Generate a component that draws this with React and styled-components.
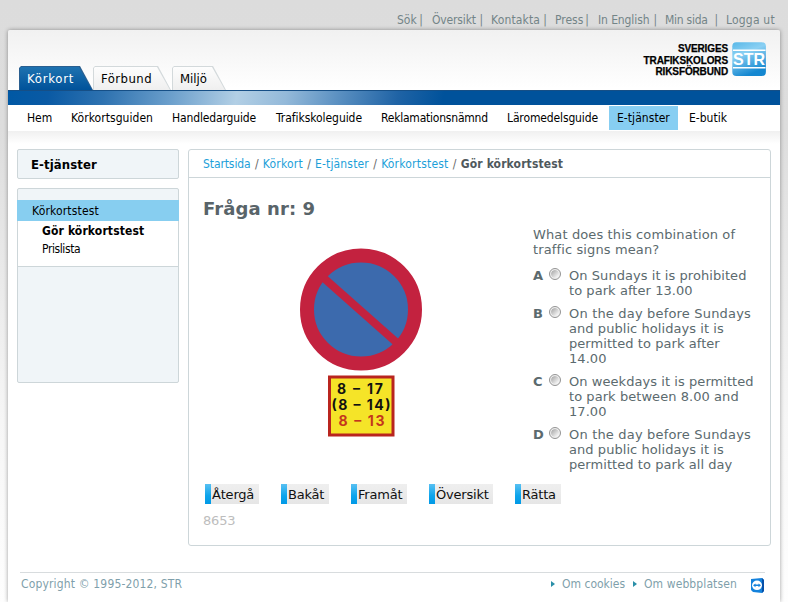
import React from 'react';
import styled, { createGlobalStyle, css } from 'styled-components';

const narrow = '"DejaVu Sans Condensed", "DejaVu Sans", sans-serif';
const wide = '"DejaVu Sans", sans-serif';

const Global = createGlobalStyle`
  * { box-sizing: border-box; }
  body {
    margin: 0;
    height: 602px;
    overflow: hidden;
    background: linear-gradient(#dcdcdc 0, #dddddd 130px, #f6f6f6 420px, #fefefe 602px);
    font: 12px ${narrow};
    color: #000;
  }
`;

const Text = styled.span`
  white-space: nowrap;
  letter-spacing: ${p => p.$ls || 0}px;
`;

const Page = styled.div`
  height: 602px;
  display: flex;
  flex-direction: column;
`;

const TopLinks = styled.nav`
  height: 30px;
  padding: 13px 0 0 397px;
  display: flex;
  line-height: 14px;
  color: #738487;
`;

const TopLink = styled.a`
  width: ${p => p.$w}px;
  display: flex;
  justify-content: space-between;
  white-space: nowrap;
  letter-spacing: ${p => p.$ls || 0}px;
  margin-right: ${p => p.$gap}px;
`;

const Sheet = styled.div`
  flex: 1;
  width: 772px;
  margin-left: 8px;
  background: linear-gradient(#f1f1f1, #fff 58px);
  box-shadow: 0 0 4px rgba(0, 0, 0, 0.38);
  border-radius: 2px 2px 0 0;
  display: flex;
  flex-direction: column;
`;

const Header = styled.header`
  height: 60px;
  display: flex;
  justify-content: space-between;
  align-items: flex-end;
  padding-left: 11px;
`;

const Tabs = styled.div`
  display: flex;
`;

const Tab = styled.a`
  position: relative;
  width: ${p => p.$w}px;
  height: 24px;
  margin-right: ${p => p.$gap || 0}px;
  padding: 5px 0 0 8px;
  font-size: 13px;
  line-height: 16px;
  letter-spacing: ${p => p.$ls}px;
  white-space: nowrap;
  clip-path: polygon(0 2px, 2px 0, calc(100% - 13px) 0, 100% 100%, 0 100%);
  background: #d3d9db;
  isolation: isolate;
  &::before {
    content: '';
    position: absolute;
    z-index: -1;
    inset: 1px 1px 0;
    clip-path: polygon(0 1px, 1px 0, calc(100% - 13px) 0, 100% 100%, 0 100%);
    background: linear-gradient(#fdfdfd, #efefef);
  }
  ${p => p.$active && css`
    color: #fff;
    background: #2a5f90;
    &::before { background: linear-gradient(#1e72b0, #00529a); }
  `}
`;

const Brand = styled.div`
  display: flex;
  align-items: flex-start;
  gap: 4px;
  height: 60px;
  padding: 12px 13px 0 0;
`;

const BrandName = styled.div`
  padding-top: 1px;
  text-align: right;
  font: bold 10px/11.6px "Liberation Sans", sans-serif;
  letter-spacing: -0.13px;
  -webkit-text-stroke: 0.25px #000;
`;

const BlueBar = styled.div`
  height: 15px;
  border-top: 1px solid #164f86;
  background: linear-gradient(100deg, #0058a4 0, #0a5aa4 40px, #2e72b0 95px, #6a9ecb 160px, #b2cfe5 226px, #93b9d9 275px, #5c91c2 325px, #1f63a5 385px, #00529b 430px);
`;

const MainNav = styled.nav`
  height: 26px;
  padding: 1px 0 1px 11px;
  display: flex;
`;

const NavItem = styled.a`
  width: ${p => p.$w}px;
  padding-left: ${p => p.$pad || 8}px;
  line-height: 24px;
  letter-spacing: ${p => p.$ls || 0}px;
  white-space: nowrap;
  background: ${p => (p.$active ? '#87cef2' : 'transparent')};
`;

const Body = styled.div`
  display: flex;
  align-items: flex-start;
  gap: 9px;
  height: 441px;
  padding: 18px 9px 0;
  background: linear-gradient(#f0f0f0, #fff 13px);
`;

const Side = styled.aside`
  width: 162px;
  display: flex;
  flex-direction: column;
  gap: 9px;
`;

const SideTitle = styled.h2`
  margin: 0;
  height: 30px;
  padding-left: 13px;
  border: 1px solid #cdd6d9;
  border-radius: 2px;
  background: #f0f5f8;
  font-size: 13px;
  line-height: 30px;
  letter-spacing: 0.1px;
`;

const SideMenu = styled.div`
  height: 195px;
  padding-top: 11px;
  border: 1px solid #cdd6d9;
  border-radius: 2px;
  background: #f0f5f8;
`;

const SideHead = styled.a`
  display: block;
  height: 21px;
  margin: 0 -1px;
  padding-left: 15px;
  background: #87cef0;
  line-height: 23px;
  letter-spacing: 0.16px;
`;

const SideList = styled.div`
  display: flex;
  flex-direction: column;
  height: 46px;
  padding-left: 24px;
  background: #fff;
  border-bottom: 1px solid #cdd6d9;
`;

const SideLink = styled.a`
  height: 18px;
  line-height: 21px;
  font-weight: ${p => (p.$bold ? 700 : 400)};
  letter-spacing: ${p => p.$ls}px;
`;

const Content = styled.main`
  width: 583px;
  height: 397px;
  border: 1px solid #cdd6d9;
  border-radius: 3px;
  background: #fff;
`;

const Crumbs = styled.div`
  height: 28px;
  padding-left: 14px;
  display: flex;
  gap: 4.3px;
  border-bottom: 1px solid #cdd6d9;
  line-height: 29px;
  color: #666;
`;

const Crumb = styled(Text)`
  color: #1d9fd9;
`;

const Here = styled.b`
  color: #50595d;
  letter-spacing: 0.13px;
`;

const Question = styled.h1`
  margin: 0;
  height: 49px;
  padding: 19px 0 0 14px;
  font: bold 18px/23px ${wide};
  letter-spacing: 0.1px;
  color: #596469;
`;

const Quiz = styled.div`
  display: flex;
  height: 257px;
  padding-left: 110px;
`;

const Sign = styled.svg`
  width: 124px;
  height: 190px;
  margin: 21px 110px 0 0;
  flex: none;
`;

const PlateText = styled.text`
  font: 650 14px Inter, sans-serif;
  text-anchor: middle;
  fill: ${p => (p.$red ? '#c4361d' : '#111')};
`;

const Answers = styled.div`
  font: 13px/15px ${wide};
  color: #5b6a6e;
`;

const Prompt = styled.p`
  margin: 0 0 11px;
`;

const Answer = styled.label`
  display: flex;
  margin-bottom: 8px;
`;

const Letter = styled.b`
  width: 16px;
`;

const Radio = styled.input`
  appearance: none;
  width: 12px;
  height: 12px;
  margin: 0 8px 0 0;
  border: 1px solid #949494;
  border-radius: 50%;
  background: linear-gradient(135deg, #b4b4b4 20%, #f0f0f0 80%) content-box, #f4f4f4;
  padding: 1px;
  box-shadow: inset 0 0 0 1px #eee;
`;

const AnswerText = styled.span`
  display: flex;
  flex-direction: column;
`;

const Buttons = styled.div`
  display: flex;
  padding-left: 16px;
  height: 20px;
`;

const Button = styled.button`
  width: ${p => p.$w}px;
  height: 20px;
  margin: 0 ${p => p.$gap}px 0 0;
  padding: 1px 0 0 1px;
  border: 0;
  border-left: 6px solid transparent;
  background: linear-gradient(#efefef, #e6e6e6) padding-box,
    linear-gradient(#58c0f2, #0ca4ec 60%, #0099e6) border-box;
  font: 13px/20px ${wide};
  letter-spacing: ${p => p.$ls}px;
  text-align: left;
  white-space: nowrap;
  color: #111;
`;

const Counter = styled.div`
  padding: 9px 0 0 14px;
  font: 13px/15px ${wide};
  letter-spacing: -0.2px;
  color: #bdbdbd;
`;

const Footer = styled.footer`
  display: flex;
  height: 30px;
  margin: 0 15px 0 12px;
  border-top: 1px solid #d8dcde;
  padding: 4px 0 0 1px;
  line-height: 15px;
  color: #7f9fab;
`;

const Copyright = styled(Text)`
  width: 530px;
`;

const FootLink = styled.a`
  width: ${p => p.$w}px;
  display: flex;
  letter-spacing: ${p => p.$ls}px;
  white-space: nowrap;
  &::before {
    content: '';
    margin: 4px 7px 0 0;
    width: 0;
    height: 0;
    border: 3px solid transparent;
    border-left: 4px solid #2a8fa8;
    border-right: 0;
  }
`;

const Remote = styled.svg`
  width: 15px;
  height: 17px;
  margin-left: -1px;
`;

function Logo() {
  return (
    <svg width="35" height="35" viewBox="0 0 35 35">
      <defs>
        <linearGradient id="lg" x2="0.4" y2="1">
          <stop offset="0" stopColor="#58b8e8" />
          <stop offset="0.4" stopColor="#8bd0f3" />
          <stop offset="1" stopColor="#1487d0" />
        </linearGradient>
      </defs>
      <rect x="0.3" y="0.3" width="33.6" height="33.6" rx="4" fill="url(#lg)" />
      <path d="M1 8.3H33.5M1 25.7H33.5" stroke="#fff" strokeWidth="1.6" />
      <text x="1" y="23" fontFamily="Liberation Sans, sans-serif" fontWeight="700" fontSize="17" textLength="32" lengthAdjust="spacingAndGlyphs" fill="#fff">STR</text>
    </svg>
  );
}

function TrafficSign() {
  return (
    <Sign viewBox="0 0 124 190">
      <circle cx="62" cy="61.5" r="54" fill="#3c6aad" stroke="#c3223f" strokeWidth="14" />
      <path d="M22.5 28L101.5 98" stroke="#c3223f" strokeWidth="8" />
      <rect x="30.5" y="129" width="63.5" height="58" fill="#f5e428" stroke="#b9251f" strokeWidth="3" />
      <PlateText x="61" y="145.5" textLength="46">8 – 17</PlateText>
      <PlateText x="62" y="162" textLength="59">(8 – 14)</PlateText>
      <PlateText x="62.5" y="178.3" textLength="46" $red>8 – 13</PlateText>
    </Sign>
  );
}

const topLinks = [
  ['Sök', '|', 26, 9, 0], ['Översikt', '|', 51, 8, -0.15], ['Kontakta', '|', 56, 8, 0.15],
  ['Press', '|', 34, 9, 0], ['In English', '|', 59, 8, -0.1], ['Min sida', '|', 53, 8, -0.25], ['Logga ut', '', 52, 0, 0.2],
];

const navItems = [
  ['Hem', 44, 0], ['Körkortsguiden', 101, 0.05], ['Handledarguide', 104, -0.14], ['Trafikskoleguide', 105, -0.05],
  ['Reklamationsnämnd', 126, -0.22], ['Läromedelsguide', 110, -0.13], ['E-tjänster', 69, 0.05, true], ['E-butik', 60, 0, false, 11],
];

const answers = [
  ['A', ['On Sundays it is prohibited', 'to park after 13.00']],
  ['B', ['On the day before Sundays', 'and public holidays it is', 'permitted to park after', '14.00']],
  ['C', ['On weekdays it is permitted', 'to park between 8.00 and', '17.00']],
  ['D', ['On the day before Sundays', 'and public holidays it is', 'permitted to park all day']],
];

const buttons = [['Återgå', 54, 22], ['Bakåt', 48, 22], ['Framåt', 56, 22], ['Översikt', 64, 22], ['Rätta', 46, 0]];

export default function App() {
  return (
    <Page>
      <Global />
      <TopLinks>
        {topLinks.map(([t, bar, w, gap, ls]) => (
          <TopLink key={t} $w={w} $gap={gap} $ls={ls}>{t}{bar && <span>{bar}</span>}</TopLink>
        ))}
      </TopLinks>
      <Sheet>
        <Header>
          <Tabs>
            <Tab $w={74} $ls={0.75} $active>Körkort</Tab>
            <Tab $w={78} $gap={1} $ls={0.45}>Förbund</Tab>
            <Tab $w={54} $ls={0}>Miljö</Tab>
          </Tabs>
          <Brand>
            <BrandName>SVERIGES<br />TRAFIKSKOLORS<br />RIKSFÖRBUND</BrandName>
            <Logo />
          </Brand>
        </Header>
        <BlueBar />
        <MainNav>
          {navItems.map(([t, w, ls, active, pad]) => (
            <NavItem key={t} $w={w} $ls={ls} $active={active} $pad={pad}>{t}</NavItem>
          ))}
        </MainNav>
        <Body>
          <Side>
            <SideTitle>E-tjänster</SideTitle>
            <SideMenu>
              <SideHead>Körkortstest</SideHead>
              <SideList>
                <SideLink $bold $ls={0.13}>Gör körkortstest</SideLink>
                <SideLink $ls={-0.4}>Prislista</SideLink>
              </SideList>
            </SideMenu>
          </Side>
          <Content>
            <Crumbs>
              <Crumb $ls={-0.1}>Startsida</Crumb>/
              <Crumb $ls={0.2}>Körkort</Crumb>/
              <Crumb $ls={0.15}>E-tjänster</Crumb>/
              <Crumb $ls={0.2}>Körkortstest</Crumb>/
              <Here>Gör körkortstest</Here>
            </Crumbs>
            <Question>Fråga nr: 9</Question>
            <Quiz>
              <TrafficSign />
              <Answers>
                <Prompt>
                  <Text $ls={0.12}>What does this combination of</Text><br />
                  <Text $ls={0.12}>traffic signs mean?</Text>
                </Prompt>
                {answers.map(([letter, lines]) => (
                  <Answer key={letter}>
                    <Letter>{letter}</Letter>
                    <Radio type="radio" name="answer" />
                    <AnswerText>{lines.map(l => <Text key={l} $ls={l.startsWith('On the') ? 0.18 : 0.06}>{l}</Text>)}</AnswerText>
                  </Answer>
                ))}
              </Answers>
            </Quiz>
            <Buttons>
              {buttons.map(([t, w, gap]) => <Button key={t} $w={w} $gap={gap} $ls={-0.2}>{t}</Button>)}
            </Buttons>
            <Counter>8653</Counter>
          </Content>
        </Body>
        <Footer>
          <Copyright $ls={0.16}>Copyright © 1995-2012, STR</Copyright>
          <FootLink $w={82} $ls={0}>Om cookies</FootLink>
          <FootLink $w={118} $ls={0.1}>Om webbplatsen</FootLink>
          <Remote viewBox="0 0 15 17">
            <path d="M1 2L12 1 14 3V14L12 16 3 15 1 13Z" fill="#1482dc" />
            <path d="M12 1L14 3V14L12 16Z" fill="#064fa8" />
            <ellipse cx="7" cy="8.3" rx="5" ry="4.8" fill="#fff" />
            <path d="M3 8.3L5.5 6.4V7.6H8.5V6.4L11 8.3 8.5 10.2V9H5.5V10.2Z" fill="#1482dc" />
          </Remote>
        </Footer>
      </Sheet>
    </Page>
  );
}
